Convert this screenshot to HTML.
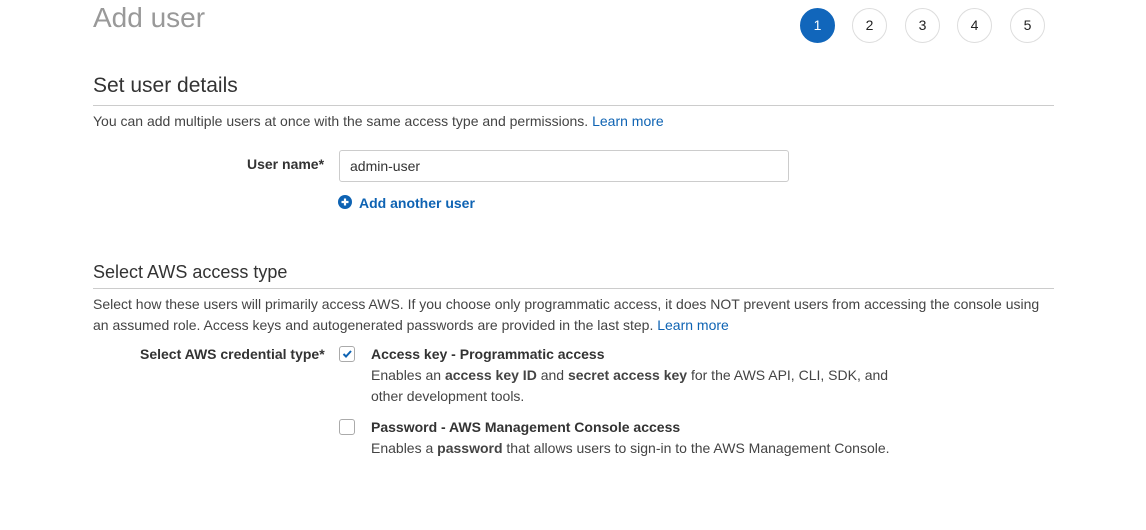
<!DOCTYPE html>
<html><head><style>
body{margin:0;width:1146px;height:530px;background:#fff;font-family:"Liberation Sans",Arial,sans-serif;color:#444;position:relative;overflow:hidden}
.a{position:absolute;white-space:nowrap}
.c{position:absolute;width:35px;height:35px;border-radius:50%;border:1px solid #ddd;box-sizing:border-box;text-align:center;line-height:33px;font-size:14px;color:#222;top:8px}
.hr{position:absolute;left:93px;width:961px;height:1px;background:#ccc}
a{color:#0e63b3;text-decoration:none}
.t{font-size:14px}
.cb{position:absolute;width:16px;height:16px;border:1px solid #aaa;border-radius:3px;box-sizing:border-box}
</style></head><body>
<div class="a" style="left:93px;top:2px;font-size:28px;color:#999">Add user</div>
<div class="c" style="left:800px;background:#1166bb;border-color:#1166bb;color:#fff">1</div>
<div class="c" style="left:852px">2</div>
<div class="c" style="left:905px">3</div>
<div class="c" style="left:957px">4</div>
<div class="c" style="left:1010px">5</div>
<div class="a" style="left:93px;top:74px;font-size:21px;color:#333">Set user details</div>
<div class="hr" style="top:105px"></div>
<div class="a t" style="left:93px;top:113px">You can add multiple users at once with the same access type and permissions. <a>Learn more</a></div>
<div class="a t" style="left:247px;top:156px;font-weight:bold;color:#333">User name*</div>
<div class="a" style="left:339px;top:150px;width:450px;height:32px;border:1px solid #ccc;border-radius:3px;box-sizing:border-box;font-size:14px;color:#333;padding:7px 10px">admin-user</div>
<svg class="a" style="left:338px;top:195px" width="14" height="14" viewBox="0 0 14 14"><circle cx="7" cy="7" r="7" fill="#0e63b3"/><path d="M7 3.5v7M3.5 7h7" stroke="#fff" stroke-width="2.2"/></svg>
<div class="a t" style="left:359px;top:195px;font-weight:bold;color:#0e63b3">Add another user</div>
<div class="a" style="left:93px;top:262px;font-size:18px;color:#333">Select AWS access type</div>
<div class="hr" style="top:288px"></div>
<div class="a t" style="left:93px;top:294px;line-height:21px">Select how these users will primarily access AWS. If you choose only programmatic access, it does NOT prevent users from accessing the console using<br>an assumed role. Access keys and autogenerated passwords are provided in the last step. <a>Learn more</a></div>
<div class="a t" style="left:140px;top:346px;font-weight:bold;color:#333">Select AWS credential type*</div>
<div class="cb" style="left:339px;top:346px"></div>
<svg class="a" style="left:339px;top:346px" width="16" height="16" viewBox="0 0 16 16"><path d="M4.5 8l2.5 2.5 5-5.5" stroke="#0e63b3" stroke-width="2" fill="none"/></svg>
<div class="a t" style="left:371px;top:344px;line-height:21px"><b style="color:#333">Access key - Programmatic access</b><br>Enables an <b>access key ID</b> and <b>secret access key</b> for the AWS API, CLI, SDK, and<br>other development tools.</div>
<div class="cb" style="left:339px;top:419px"></div>
<div class="a t" style="left:371px;top:417px;line-height:21px"><b style="color:#333">Password - AWS Management Console access</b><br>Enables a <b>password</b> that allows users to sign-in to the AWS Management Console.</div>
</body></html>
